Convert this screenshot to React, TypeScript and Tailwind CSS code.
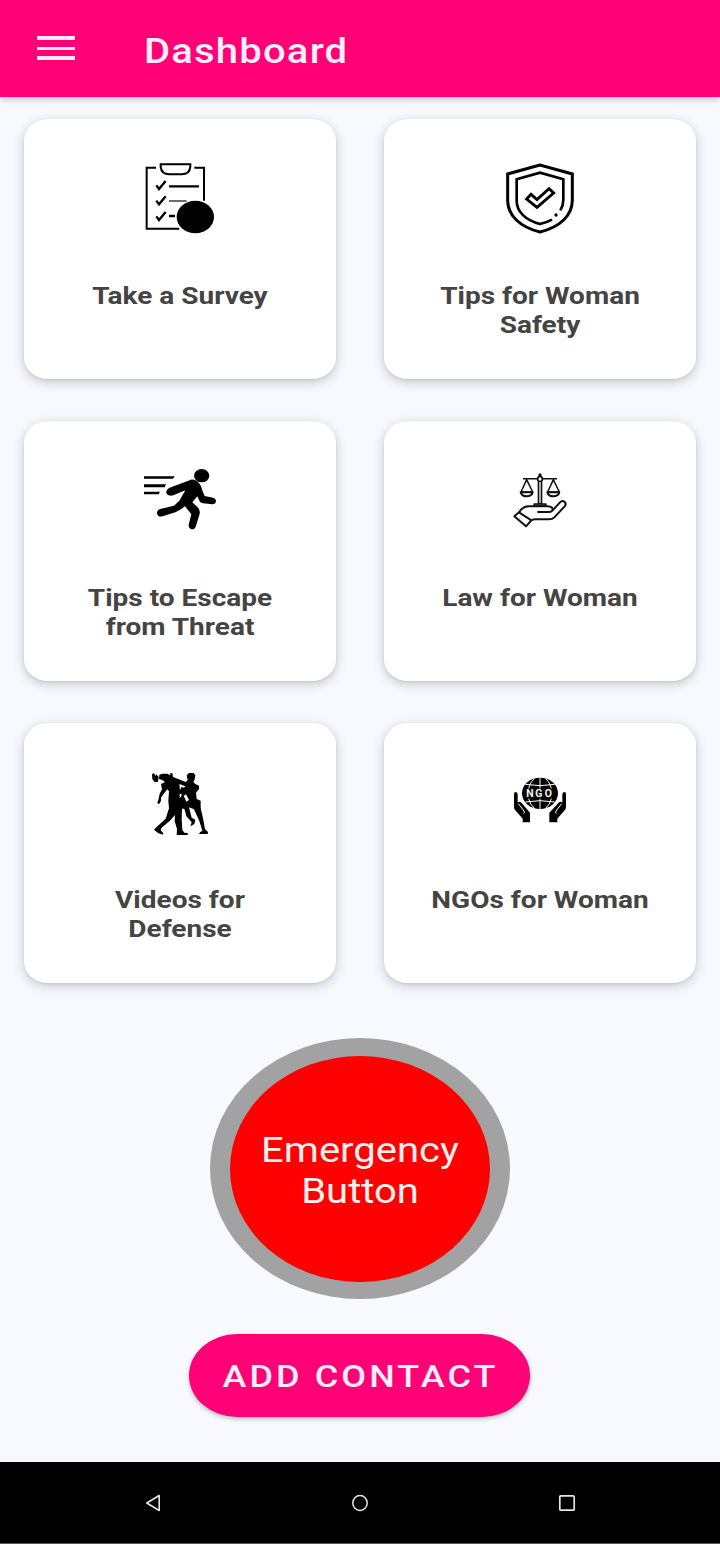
import type { ReactNode } from "react";

const SurveyIcon = () => (
  <svg className="h-[95px] w-[100px]" viewBox="0 0 300 285" fill="none" stroke="#000">
    <path d="M78 53H50V236H148" strokeWidth="6" />
    <path d="M193 53H222V152" strokeWidth="6" />
    <path d="M92 43H181V50Q179 73 155 73H118Q94 73 92 50Z" strokeWidth="6" />
    <path d="M79 106L87 117L107 93M79 152L87 163L107 139M79 199L87 210L107 186" strokeWidth="7" />
    <path d="M117 109H207M117 198H135" strokeWidth="7" />
    <path d="M117 153H170" strokeWidth="3.5" />
    <ellipse cx="196" cy="201" rx="56" ry="49" fill="#000" stroke="none" />
  </svg>
);

const ShieldIcon = () => (
  <svg className="h-[95px] w-[100px]" viewBox="0 0 300 285" fill="none" stroke="#000" strokeWidth="9">
    <path d="M150 45L53 72V150C53 197 90 231 150 246C210 231 247 197 247 150V72Z" />
    <path d="M186 209Q170 218 150 222C105 210 80 184 80 152V88L150 68L220 88V150Q220 166 211 181" strokeWidth="8" />
    <path d="M110 147L123 133L141 149L177 116L191 129L141 172Z" strokeWidth="8.5" />
    <circle cx="198" cy="195" r="5" fill="#000" stroke="none" />
  </svg>
);

const RunIcon = () => (
  <svg className="h-[85px] w-[100px]" viewBox="0 0 300 255">
    <ellipse cx="215" cy="62" rx="23" ry="20" />
    <path d="M42 64H134L129 71H42ZM42 88H108L104 97H42ZM42 110H90L86 118H42Z" />
    <path d="M183 74C192 73 201 78 207 84C216 95 216 108 224 123L249 128Q258 131 258 139Q257 148 247 148L219 145Q211 143 208 137L202 124L187 142L203 157Q211 166 209 176L198 213Q194 224 185 223Q175 220 176 209L184 178L165 154L153 163L136 172L98 184Q84 187 81 176Q80 165 91 162L132 152L148 137L166 106L130 121Q114 125 109 115Q107 105 117 99Z" />
  </svg>
);

const LawIcon = () => (
  <svg className="h-[75px] w-[80px]" viewBox="0 0 240 225" fill="none" stroke="#111" strokeWidth="6" strokeLinejoin="round">
    <path d="M69 56H113M127 56H171" strokeWidth="4.5" />
    <ellipse cx="120" cy="57" rx="7" ry="8" strokeWidth="5" />
    <ellipse cx="120" cy="45" rx="5" ry="5" fill="#111" stroke="none" />
    <path d="M115 66V131H125V66" fill="#aaa" strokeWidth="4" />
    <path d="M102 132H138V138H102Z" fill="#888" strokeWidth="4" />
    <path d="M80 59L63 96H98ZM160 59L143 96H178Z" strokeWidth="4.5" />
    <path d="M62 97Q66 109 80 109Q95 109 98 97ZM142 97Q146 109 160 109Q175 109 178 97Z" />
    <path d="M57 157L43 169L78 199L94 181Z" />
    <path d="M57 157Q68 139 86 139H143Q158 140 158 148Q158 156 146 156H112" />
    <path d="M158 151L180 127Q187 120 194 126Q200 132 194 139L163 172Q157 178 147 178H105Q98 178 94 182" />
  </svg>
);

const DefenseIcon = () => (
  <svg className="h-[85px] w-[80px]" viewBox="0 0 240 255">
    <path d="M42 39L36 43L37 58L45 67L54 65L56 51L49 43L46 48Z" />
    <path d="M58 44L68 41H82L91 46V39L97 40L99 51L137 66L143 60L140 46L147 39H161L166 46L164 58L160 66L166 72L177 77V87L168 98L170 117L182 122V144L189 175L195 207L204 216L203 222H177L180 217L187 212L178 183L162 148L147 142L155 173L166 179L163 192L151 199L155 187L139 168L133 146L126 146L125 178L127 209L133 218L143 219V225H110L111 207L104 183L105 165L89 183L64 204L62 211L70 220L67 224L54 219L42 209L49 202L77 176L87 145L85 122L87 94L82 88L70 103L63 113V123L57 133L52 129L56 116L59 101L66 88L63 72L75 66L67 60L57 57Z" />
    <path d="M112 70L139 76L134 85L139 103L149 121L137 130L120 130L117 117Z" />
    <path d="M118 72L136 79L132 83L125 80L120 90ZM138 103L147 120L139 125L134 114L131 108ZM119 101L125 102L124 109L119 114Z" fill="#fff" />
  </svg>
);

const NgoIcon = () => (
  <svg className="h-[70px] w-[80px]" viewBox="0 0 240 210">
    <ellipse cx="120" cy="85" rx="54" ry="47" />
    <g fill="none" stroke="#fff" strokeWidth="3">
      <path d="M120 38V70M120 101V132M76 58Q120 66 164 58M76 111Q120 103 164 111" />
      <path d="M103 40Q89 54 86 70M86 101Q90 119 103 130M137 40Q151 54 154 70M154 101Q150 119 137 130" />
    </g>
    <text x="79 106 134" y="96.5" fill="#fff" stroke="#fff" strokeWidth="0.6" className="font-['Roboto',sans-serif] text-[31px] font-medium">NGO</text>
    <path d="M42 87Q42 81 47 81Q52 81 53 88V112Q60 107 67 116L90 143V172H68V161L46 136Q42 132 42 126Z" />
    <path d="M55 116L72 138Q75 143 71 146" fill="none" stroke="#fff" strokeWidth="3" />
    <path d="M198 87Q198 81 193 81Q188 81 187 88V112Q180 107 173 116L148 143V172H172V161L194 136Q198 132 198 126Z" />
    <path d="M185 116L168 138Q165 143 169 146" fill="none" stroke="#fff" strokeWidth="3" />
  </svg>
);

const cards: { lines: string[]; icon: ReactNode; pad: string }[] = [
  { lines: ["Take a Survey"], icon: <SurveyIcon />, pad: "pt-[31px]" },
  { lines: ["Tips for Woman", "Safety"], icon: <ShieldIcon />, pad: "pt-[31px]" },
  { lines: ["Tips to Escape", "from Threat"], icon: <RunIcon />, pad: "pt-[34px]" },
  { lines: ["Law for Woman"], icon: <LawIcon />, pad: "pt-[39px]" },
  { lines: ["Videos for", "Defense"], icon: <DefenseIcon />, pad: "pt-[37px]" },
  { lines: ["NGOs for Woman"], icon: <NgoIcon />, pad: "pt-[42px]" },
];

export default function App() {
  return (
    <div className="flex h-[1544px] w-[720px] flex-col overflow-hidden bg-[#f8f9ff] font-['Roboto',sans-serif]">
      <header className="flex h-[97px] shrink-0 items-start bg-[#ff0077] text-white shadow-[0_1px_8px_rgba(0,0,0,0.3)]">
        <button aria-label="Menu" className="ml-[37px] mt-[36px] flex h-[24px] w-[38px] flex-col justify-between text-[#ffe9f6]">
          <span className="h-[4px] w-full bg-current" />
          <span className="h-[3px] w-full bg-current" />
          <span className="h-[4px] w-full bg-current" />
        </button>
        <h1 className="ml-[69px] mt-[31px] origin-top scale-y-[0.868] whitespace-nowrap text-[40px] font-medium leading-[47px] tracking-[1.2px] text-[#fff0f8]">
          Dashboard
        </h1>
      </header>

      <main className="flex flex-1 flex-col items-center">
        <section className="mt-[22px] grid w-full grid-cols-2 gap-x-12 gap-y-[42px] px-6">
          {cards.map((c) => (
            <article
              key={c.lines[0]}
              className="flex h-[260px] flex-col items-center rounded-[24px/21px] bg-white shadow-[0_3px_12px_rgba(0,0,0,0.2),0_1px_3px_rgba(0,0,0,0.08)]"
            >
              <div className={`h-[162px] ${c.pad}`}>{c.icon}</div>
              <h2 className="origin-top scale-y-[0.868] whitespace-nowrap text-center text-[28px] font-bold leading-[34px] text-[#444]">
                {c.lines.map((l) => (
                  <span key={l} className="block">{l}</span>
                ))}
              </h2>
            </article>
          ))}
        </section>

        <button className="mt-[55.4px] flex h-[261px] w-[300px] items-center justify-center rounded-[50%] bg-[#a2a2a2]">
          <span className="flex h-[226px] w-[260px] items-center justify-center rounded-[50%] bg-[#ff0000] pt-[4px]">
            <span className="scale-y-[0.868] text-[40px] leading-[47px] text-[#fff0f0]">
              <span className="block">Emergency</span>
              <span className="block">Button</span>
            </span>
          </span>
        </button>

        <button className="mr-[1px] mt-[34.6px] flex h-[83px] w-[341px] items-center justify-center rounded-[48px/41.5px] bg-[#ff0077] pl-[2px] pt-[4px] shadow-[0_2px_4px_rgba(0,0,0,0.25)]">
          <span className="scale-y-[0.868] whitespace-nowrap text-[36px] font-medium leading-[42px] tracking-[3.1px] text-[#fff0f8]">
            ADD CONTACT
          </span>
        </button>
      </main>

      <nav className="flex h-[82px] shrink-0 items-center justify-between border-b border-[#555] bg-black px-[143px]">
        <svg className="h-[20px] w-[20px]" viewBox="0 0 20 20" fill="none" stroke="#e6e6e6" strokeWidth="1.6" strokeLinejoin="round">
          <path d="M3.8 10L16.2 2.5V17.5Z" />
        </svg>
        <svg className="h-[20px] w-[20px]" viewBox="0 0 20 20" fill="none" stroke="#e6e6e6" strokeWidth="1.5">
          <ellipse cx="10" cy="10" rx="7.2" ry="7.4" />
        </svg>
        <svg className="h-[20px] w-[20px]" viewBox="0 0 20 20" fill="none" stroke="#e6e6e6" strokeWidth="1.7">
          <rect x="2.8" y="2.8" width="14.4" height="14.4" rx="1" />
        </svg>
      </nav>
    </div>
  );
}
